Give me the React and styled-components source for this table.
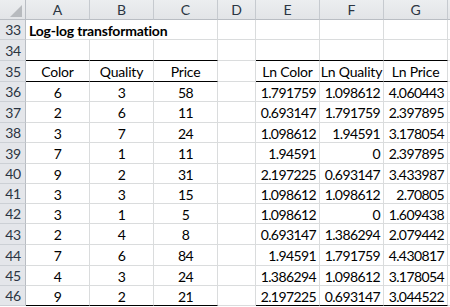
import React from "react";
import styled, { createGlobalStyle } from "styled-components";

const GlobalStyle = createGlobalStyle`
  body {
    margin: 0;
    background: #fff;
    overflow: hidden;
  }
`;

const WIDTHS = [26, 64, 64, 64, 38, 64, 64, 64, 40];
const LETTERS = ["A", "B", "C", "D", "E", "F", "G", ""];
const HEIGHTS = [20, 21, 21, 20, 21, 20, 21, 20, 20, 20, 21, 21, 20, 20, 20];

const data = [
  [36, 6, 3, 58, "1.791759", "1.098612", "4.060443"],
  [37, 2, 6, 11, "0.693147", "1.791759", "2.397895"],
  [38, 3, 7, 24, "1.098612", "1.94591", "3.178054"],
  [39, 7, 1, 11, "1.94591", "0", "2.397895"],
  [40, 9, 2, 31, "2.197225", "0.693147", "3.433987"],
  [41, 3, 3, 15, "1.098612", "1.098612", "2.70805"],
  [42, 3, 1, 5, "1.098612", "0", "1.609438"],
  [43, 2, 4, 8, "0.693147", "1.386294", "2.079442"],
  [44, 7, 6, 84, "1.94591", "1.791759", "4.430817"],
  [45, 4, 3, 24, "1.386294", "1.098612", "3.178054"],
  [46, 9, 2, 21, "2.197225", "0.693147", "3.044522"],
];

const Frame = styled.div`
  width: 450px;
  height: 307px;
  overflow: hidden;
`;

const Sheet = styled.div`
  display: grid;
  grid-template-columns: ${WIDTHS.map((w) => w + "px").join(" ")};
  grid-template-rows: 20px ${HEIGHTS.map((h) => h + "px").join(" ")};
  font-family: Lato, "Liberation Sans", sans-serif;
  font-size: 14px;
  color: #000;
`;

const Corner = styled.div`
  background: linear-gradient(#eceef0, #e2e4e7);
  border-right: 1px solid #b9bdc3;
  border-bottom: 1px solid #b9bdc3;
  display: flex;
  align-items: flex-end;
  justify-content: flex-end;
  padding: 0 3px 2px 0;
  box-sizing: border-box;
`;

const ColHead = styled.div`
  background: linear-gradient(#eceef0, #e2e4e7);
  border-right: 1px solid #c6cacf;
  border-bottom: 1px solid #b9bdc3;
  box-sizing: border-box;
  display: flex;
  align-items: center;
  justify-content: center;
  color: #2b3542;
`;

const RowHead = styled.div`
  background: #e4e6ea;
  border-right: 1px solid #b9bdc3;
  border-bottom: 1px solid #ccd0d5;
  box-sizing: border-box;
  display: flex;
  align-items: center;
  justify-content: center;
  padding-left: 1px;
  letter-spacing: -0.4px;
  color: #2b3542;
`;

const Cell = styled.div`
  border-right: 1px solid #dadcdd;
  border-bottom: 1px solid ${(p) => (p.$rule ? "#000" : "#dadcdd")};
  box-sizing: border-box;
  display: flex;
  align-items: center;
  justify-content: ${(p) =>
    p.$align === "right" ? "flex-end" : p.$align === "left" ? "flex-start" : "center"};
  padding: 1px 3px 0 3px;
  white-space: nowrap;
  letter-spacing: ${(p) => (p.$num ? "-0.6px" : "-0.2px")};
  font-weight: ${(p) => (p.$bold ? 700 : 400)};
  grid-column: ${(p) => (p.$span ? `span ${p.$span}` : "auto")};
`;

const Triangle = () => (
  <svg width="12" height="12" viewBox="0 0 12 12">
    <polygon points="12,0 12,12 0,12" fill="#b7babe" />
  </svg>
);

const ruleCols = (i) => i !== 3 && i !== 7;

export default function App() {
  return (
    <Frame>
      <GlobalStyle />
      <Sheet>
        <Corner>
          <Triangle />
        </Corner>
        {LETTERS.map((l, i) => (
          <ColHead key={i}>{l}</ColHead>
        ))}

        <RowHead>33</RowHead>
        <Cell $span={3} $align="left" $bold>
          Log-log transformation
        </Cell>
        {[3, 4, 5, 6, 7].map((i) => (
          <Cell key={i} />
        ))}

        <RowHead>34</RowHead>
        {LETTERS.map((_, i) => (
          <Cell key={i} $rule={ruleCols(i)} />
        ))}

        <RowHead>35</RowHead>
        {["Color", "Quality", "Price", "", "Ln Color", "Ln Quality", "Ln Price", ""].map(
          (t, i) => (
            <Cell key={i} $rule={ruleCols(i)}>
              {t}
            </Cell>
          )
        )}

        {data.map(([n, a, b, c, e, f, g], r) => {
          const last = r === data.length - 1;
          return (
            <React.Fragment key={n}>
              <RowHead>{n}</RowHead>
              <Cell $num $rule={last}>{a}</Cell>
              <Cell $num $rule={last}>{b}</Cell>
              <Cell $num $rule={last}>{c}</Cell>
              <Cell />
              <Cell $num $rule={last} $align="right">{e}</Cell>
              <Cell $num $rule={last} $align="right">{f}</Cell>
              <Cell $num $rule={last} $align="right">{g}</Cell>
              <Cell />
            </React.Fragment>
          );
        })}
      </Sheet>
    </Frame>
  );
}
